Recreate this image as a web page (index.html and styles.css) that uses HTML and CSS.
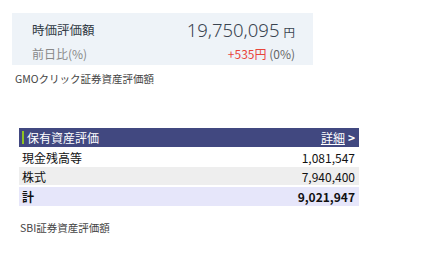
FILE: index.html
```html
<!DOCTYPE html>
<html lang="ja">
<head>
<meta charset="utf-8">
<link rel="stylesheet" href="styles.css">
</head>
<body>
<div class="summary">
  <div class="row top">
    <span class="label">時価評価額</span>
    <span class="value"><span class="big">19,750,095</span><span class="yen">円</span></span>
  </div>
  <div class="row sub">
    <span class="label-sub">前日比(%)</span>
    <span class="change"><span class="plus">+535円</span> (0%)</span>
  </div>
</div>
<div class="caption gmo">GMOクリック証券資産評価額</div>

<div class="holdings">
  <div class="head">
    <span class="title">保有資産評価</span>
    <a class="more">詳細</a><span class="chev">&gt;</span>
  </div>
  <div class="line"><span>現金残高等</span><span>1,081,547</span></div>
  <div class="line alt"><span>株式</span><span>7,940,400</span></div>
  <div class="line total"><span>計</span><span>9,021,947</span></div>
</div>
<div class="caption sbi">SBI証券資産評価額</div>
</body>
</html>
```
FILE: styles.css
```css
html, body { margin: 0; padding: 0; background: #fff; }
body {
  font-family: "Noto Sans CJK JP", "Noto Sans", sans-serif;
  color: #333;
  padding-top: 13px;
}
.summary {
  margin-left: 12px;
  width: 301px;
  height: 52px;
  background: #eef3f8;
  box-sizing: border-box;
  padding: 0 18px 0 20px;
}
.row { display: flex; justify-content: space-between; align-items: center; }
.top { height: 28px; padding-top: 2px; }
.sub { height: 20px; }
.label { font-size: 12.5px; color: #2f3843; }
.value { display: flex; align-items: baseline; }
.big { font-family: "Noto Sans", sans-serif; font-weight: 300; font-size: 18.5px; color: #3a4450; }
.yen { font-size: 11.5px; color: #3a4450; margin-left: 4px; }
.label-sub { font-size: 12px; color: #888; }
.change { font-size: 12px; color: #666; }
.plus { color: #e8453c; }
.caption { font-size: 10.5px; color: #444; }
.gmo { margin-left: 15px; margin-top: 6px; height: 16px; line-height: 16px; }
.holdings {
  margin-left: 19px;
  margin-top: 41px;
  width: 340px;
  font-size: 12px;
}
.head {
  height: 19px;
  background: #414880;
  color: #fff;
  display: flex;
  align-items: center;
  padding: 0 4px 0 3px;
}
.title { border-left: 2px solid #8fc31f; padding-left: 3px; line-height: 13px; flex: 1; }
.more { color: #fff; text-decoration: underline; }
.chev { margin-left: 3px; font-weight: bold; }
.line {
  display: flex;
  justify-content: space-between;
  align-items: center;
  padding: 0 4px 0 3px;
  color: #111;
}
.line:nth-child(2) { height: 20px; }
.alt { height: 18px; background: #eeeeee; }
.total { height: 19px; background: #e6e6fa; font-weight: bold; margin-top: 2px; }
.sbi { margin-left: 20px; margin-top: 14px; }
```
